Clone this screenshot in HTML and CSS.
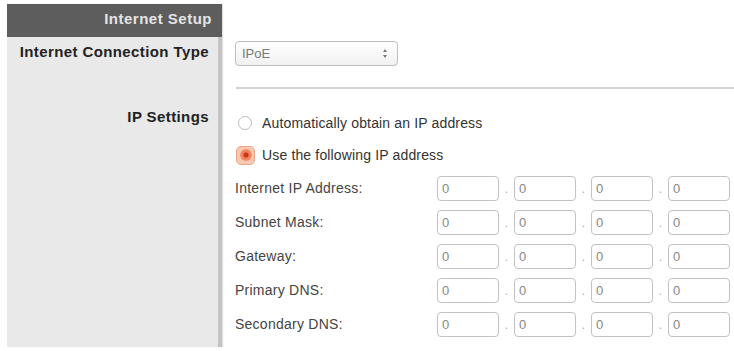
FILE: index.html
```html
<!DOCTYPE html>
<html>
<head>
<meta charset="utf-8">
<link rel="stylesheet" href="styles.css">
</head>
<body>
<div class="page">
  <aside class="sidebar">
    <div class="sidebar-head">Internet Setup</div>
    <div class="side-label first">Internet Connection Type</div>
    <div class="side-label second">IP Settings</div>
  </aside>
  <main class="main">
    <div class="select">
      <span class="select-text">IPoE</span>
      <span class="select-arrows"><span class="arr up"></span><span class="arr down"></span></span>
    </div>
    <div class="divider"></div>
    <div class="radio-row">
      <span class="radio"></span>
      <span class="radio-label">Automatically obtain an IP address</span>
    </div>
    <div class="radio-row">
      <span class="radio checked"><span class="radio-dot"></span></span>
      <span class="radio-label">Use the following IP address</span>
    </div>
    <div class="ip-row">
      <span class="ip-label">Internet IP Address:</span>
      <div class="ip-fields"><span class="field">0</span><span class="dot">.</span><span class="field">0</span><span class="dot">.</span><span class="field">0</span><span class="dot">.</span><span class="field">0</span></div>
    </div>
    <div class="ip-row">
      <span class="ip-label">Subnet Mask:</span>
      <div class="ip-fields"><span class="field">0</span><span class="dot">.</span><span class="field">0</span><span class="dot">.</span><span class="field">0</span><span class="dot">.</span><span class="field">0</span></div>
    </div>
    <div class="ip-row">
      <span class="ip-label">Gateway:</span>
      <div class="ip-fields"><span class="field">0</span><span class="dot">.</span><span class="field">0</span><span class="dot">.</span><span class="field">0</span><span class="dot">.</span><span class="field">0</span></div>
    </div>
    <div class="ip-row">
      <span class="ip-label">Primary DNS:</span>
      <div class="ip-fields"><span class="field">0</span><span class="dot">.</span><span class="field">0</span><span class="dot">.</span><span class="field">0</span><span class="dot">.</span><span class="field">0</span></div>
    </div>
    <div class="ip-row">
      <span class="ip-label">Secondary DNS:</span>
      <div class="ip-fields"><span class="field">0</span><span class="dot">.</span><span class="field">0</span><span class="dot">.</span><span class="field">0</span><span class="dot">.</span><span class="field">0</span></div>
    </div>
  </main>
</div>
</body>
</html>
```

FILE: styles.css
```css
html, body {
  margin: 0;
  padding: 0;
  background: #ffffff;
}
body {
  font-family: "Liberation Sans", Arial, sans-serif;
  width: 734px;
  height: 351px;
  overflow: hidden;
}
.page {
  display: flex;
  height: 351px;
}
.sidebar {
  box-sizing: border-box;
  width: 215px;
  margin: 4px 0 4px 7px;
  background: #e9e9e9;
  border-right: 4px solid #c3c3c3;
  box-shadow: 1px 0 1px #e0e0e0;
  display: flex;
  flex-direction: column;
  align-items: stretch;
}
.sidebar-head {
  height: 33px;
  background: #5d5d5d;
  color: #e4e4e4;
  font-weight: bold;
  font-size: 15px;
  letter-spacing: 0.5px;
  line-height: 30px;
  text-align: right;
  padding-right: 10px;
  margin-right: -4px;
}
.side-label {
  font-weight: bold;
  font-size: 15px;
  letter-spacing: 0.4px;
  color: #222;
  text-align: right;
  padding-right: 9px;
  line-height: 20px;
}
.side-label.first { margin-top: 5px; }
.side-label.second { margin-top: 45px; }

.main {
  flex: 1;
  padding: 41px 0 0 13px;
  display: flex;
  flex-direction: column;
}
.select {
  box-sizing: border-box;
  width: 163px;
  height: 25px;
  border: 1px solid #bdbdbd;
  border-radius: 4px;
  background: linear-gradient(#ffffff, #f1f1f1);
  display: flex;
  align-items: center;
  justify-content: space-between;
  padding: 0 10px 0 6px;
}
.select-text {
  font-size: 13px;
  color: #777;
}
.select-arrows {
  display: flex;
  flex-direction: column;
  gap: 3px;
}
.arr {
  width: 0;
  height: 0;
  border-left: 2.5px solid transparent;
  border-right: 2.5px solid transparent;
}
.arr.up { border-bottom: 3px solid #777; }
.arr.down { border-top: 3px solid #777; }

.divider {
  height: 2px;
  background: #d4d4d4;
  margin-top: 21px;
  margin-left: 1px;
}
.radio-row {
  height: 32px;
  display: flex;
  align-items: center;
  gap: 10px;
}
.divider + .radio-row { margin-top: 18px; }
.radio {
  box-sizing: border-box;
  width: 14px;
  height: 14px;
  margin-left: 3px;
  border: 1px solid #bdbdbd;
  border-radius: 50%;
  background: #fff;
  flex: none;
}
.radio.checked {
  width: 19px;
  height: 19px;
  margin-left: 1px;
  margin-right: -3px;
  border-radius: 5px;
  border: 1px solid #eea583;
  background: #f9c9b1;
  display: flex;
  align-items: center;
  justify-content: center;
}
.radio-dot {
  width: 12px;
  height: 12px;
  border-radius: 50%;
  background: radial-gradient(circle, #c8361a 0 2px, #ee7b55 3px, #f2936f 6px);
}
.radio-label {
  font-size: 14px;
  letter-spacing: 0.15px;
  color: #333;
}
.ip-row {
  height: 34px;
  display: flex;
  align-items: center;
}
.ip-label {
  width: 202px;
  font-size: 14px;
  color: #444;
  flex: none;
  letter-spacing: 0.25px;
}
.ip-fields {
  display: flex;
  align-items: center;
}
.field {
  box-sizing: border-box;
  width: 62px;
  height: 25px;
  border: 1px solid #c2c2c2;
  border-radius: 4px;
  font-size: 13px;
  color: #888;
  line-height: 23px;
  padding-left: 4px;
}
.dot {
  width: 15px;
  text-align: center;
  font-size: 12px;
  color: #aaa;
  line-height: 25px;
  padding-top: 3px;
}
```
